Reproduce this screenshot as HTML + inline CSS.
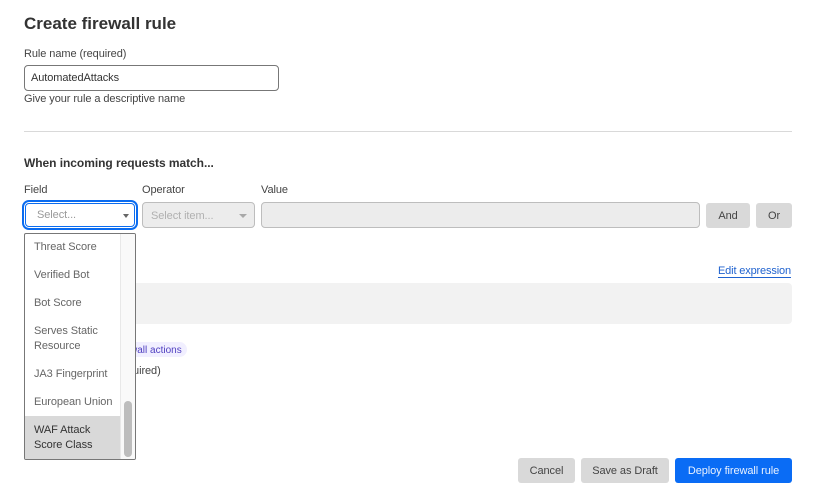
<!DOCTYPE html>
<html><head><meta charset="utf-8"><style>
html,body{margin:0;padding:0;background:#fff}
body{width:825px;height:501px;position:relative;overflow:hidden;font-family:"Liberation Sans",sans-serif;color:#444}
div{position:absolute;box-sizing:border-box;white-space:nowrap}
.t{font-size:11px;line-height:14px;letter-spacing:-.08px}
.btn{background:#d9d9d9;border-radius:3px;font-size:11px;letter-spacing:-.08px;text-align:center;line-height:27px;height:25px;top:203px;color:#444}
.i{left:34px;font-size:11px;line-height:15px;letter-spacing:-.08px;color:#666}
.tri{width:0;height:0;border-left:4px solid transparent;border-right:4px solid transparent;border-top:4px solid #666}
</style></head><body>
<div style="left:24px;top:13px;font-size:17px;line-height:22px;font-weight:bold;color:#333">Create firewall rule</div>
<div class="t" style="left:24px;top:47px">Rule name (required)</div>
<div style="left:24px;top:65px;width:255px;height:26px;border:1px solid #777;border-radius:4px"></div>
<div class="t" style="left:31px;top:71px;color:#333">AutomatedAttacks</div>
<div class="t" style="left:24px;top:92px">Give your rule a descriptive name</div>
<div style="left:24px;top:131px;width:768px;height:1px;background:#d9d9d9"></div>
<div style="left:24px;top:156px;font-size:12px;line-height:15px;font-weight:bold;color:#333;letter-spacing:-.05px">When incoming requests match...</div>
<div class="t" style="left:24px;top:183px">Field</div>
<div class="t" style="left:142px;top:183px">Operator</div>
<div class="t" style="left:261px;top:183px">Value</div>

<div style="left:22px;top:200px;width:116px;height:30px;border:2px solid #0a6cf0;border-radius:7px;background:#fff"></div>
<div style="left:25px;top:203px;width:110px;height:24px;border:1px solid #0a6cf0;border-radius:4px;background:#fff"></div>
<div class="t" style="left:37px;top:208px;color:#999">Select...</div>
<div class="tri" style="left:123px;top:214px;border-left-width:3.5px;border-right-width:3.5px"></div>

<div style="left:142px;top:202px;width:113px;height:26px;border:1px solid #bdbdbd;border-radius:4px;background:#ececec"></div>
<div class="t" style="left:151px;top:209px;color:#b0b0b0">Select item...</div>
<div class="tri" style="left:239px;top:214px;border-top-color:#a8a8a8"></div>

<div style="left:261px;top:202px;width:439px;height:26px;border:1px solid #bdbdbd;border-radius:4px;background:#ececec"></div>
<div class="btn" style="left:706px;width:44px">And</div>
<div class="btn" style="left:756px;width:36px">Or</div>

<div class="t" style="left:718px;top:264px;color:#1f62cf;border-bottom:1px solid #1f62cf;height:14px;width:73px;line-height:15px;letter-spacing:-.15px">Edit expression</div>
<div style="left:24px;top:283px;width:768px;height:41px;background:#f2f2f2;border-radius:4px"></div>

<div style="left:110px;top:342px;width:77px;height:15px;background:#f1efff;border-radius:8px"></div>
<div style="left:130px;top:344px;font-size:10px;line-height:13px;color:#4f3fc0">wall actions</div>
<div class="t" style="left:127px;top:364px">quired)</div>

<div style="left:24px;top:233px;width:112px;height:227px;border:1px solid #777;border-radius:2px;background:#fff;overflow:hidden">
  <div style="left:95px;top:0;width:15px;height:225px;background:#f9f9f9;border-left:1px solid #e8e8e8"></div>
  <div style="left:99px;top:167px;width:8px;height:56px;background:#bdbdbd;border-radius:4px"></div>
  <div style="left:0;top:182px;width:95px;height:43px;background:#d9d9d9"></div>
</div>
<div class="i" style="top:240px">Threat Score</div>
<div class="i" style="top:268px">Verified Bot</div>
<div class="i" style="top:296px">Bot Score</div>
<div class="i" style="top:324px">Serves Static<br>Resource</div>
<div class="i" style="top:367px">JA3 Fingerprint</div>
<div class="i" style="top:395px">European Union</div>
<div class="i" style="top:423px;color:#333">WAF Attack<br>Score Class</div>

<div class="btn" style="left:518px;top:458px;width:57px">Cancel</div>
<div class="btn" style="left:581px;top:458px;width:88px">Save as Draft</div>
<div class="btn" style="left:675px;top:458px;width:117px;background:#0a6cf5;color:#eaf2ff">Deploy firewall rule</div>
</body></html>
